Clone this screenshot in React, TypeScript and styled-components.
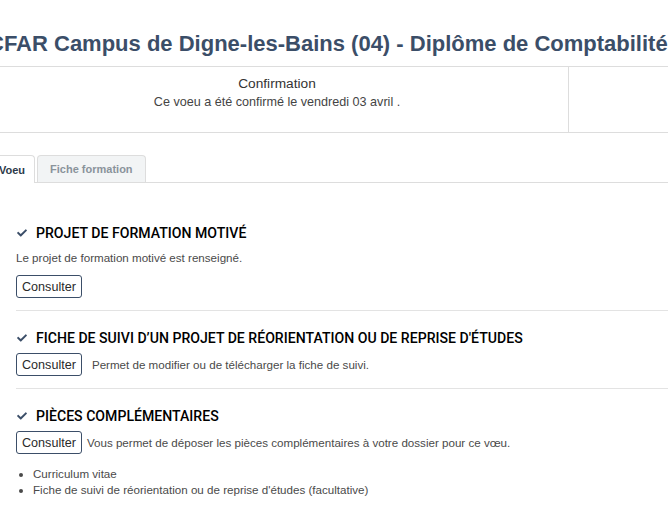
import React from "react";
import styled, { createGlobalStyle } from "styled-components";

const GlobalStyle = createGlobalStyle`
  html, body {
    margin: 0;
    padding: 0;
    background: #ffffff;
    overflow: hidden;
  }
  body {
    font-family: "Liberation Sans", Arial, sans-serif;
    color: #333;
  }
`;

const Page = styled.div`
  width: 720px;
  margin-left: -14px;
`;

const Title = styled.h1`
  margin: 0;
  padding: 30px 0 9px 2px;
  font-family: "Liberation Sans", Arial, sans-serif;
  font-size: 22px;
  line-height: 27px;
  font-weight: 700;
  color: #3b4e68;
  white-space: nowrap;
  overflow: hidden;
`;

const InfoRow = styled.div`
  display: flex;
  border-top: 1px solid #dddddd;
`;

const InfoCell = styled.div<{ $width?: number; $divider?: boolean }>`
  box-sizing: border-box;
  ${(p) => (p.$width ? `width: ${p.$width}px;` : "flex: 1;")}
  height: 66px;
  border-bottom: 1px solid #dddddd;
  ${(p) => (p.$divider ? "border-left: 1px solid #dddddd;" : "")}
  text-align: center;
  padding-top: 8px;
`;

const InfoTitle = styled.div`
  font-size: 13.7px;
  line-height: 18px;
  color: #333;
`;

const InfoText = styled.div`
  font-size: 12.6px;
  line-height: 18px;
  color: #444;
`;

const TabBar = styled.div`
  display: flex;
  gap: 2px;
  margin-top: 22px;
  border-bottom: 1px solid #dddddd;
`;

const Tab = styled.div<{ $active?: boolean }>`
  box-sizing: border-box;
  height: ${(p) => (p.$active ? 28 : 27)}px;
  padding: ${(p) => (p.$active ? "0 9px 0 12px" : "0 12px")};
  display: flex;
  align-items: center;
  font-size: 11px;
  font-weight: 700;
  border: 1px solid #dddddd;
  border-bottom: none;
  border-radius: 4px 4px 0 0;
  margin-bottom: -1px;
  background: ${(p) => (p.$active ? "#ffffff" : "#f2f4f5")};
  color: ${(p) => (p.$active ? "#2d3a4a" : "#8a939b")};
`;

const Panel = styled.div`
  padding: 40px 0 0 30px;
`;

const Section = styled.section<{ $top: number; $last?: boolean }>`
  padding: ${(p) => p.$top}px 0 12px;
  ${(p) => (p.$last ? "" : "border-bottom: 1px solid #e3e3e3;")}
`;

const Heading = styled.h2`
  display: flex;
  align-items: center;
  gap: 9px;
  margin: 0;
  padding-left: 1px;
  height: 20px;
  font-family: Roboto, "Liberation Sans", sans-serif;
  font-size: 14.1px;
  font-weight: 500;
  color: #000;
  text-transform: uppercase;
  white-space: nowrap;
`;

const CheckIcon = styled.svg`
  width: 10px;
  height: 10px;
  fill: #3b4e68;
  flex: none;
`;

const Text = styled.p`
  margin: 7px 0 0;
  font-size: 11.6px;
  line-height: 16px;
  color: #4a4a4a;
`;

const ActionRow = styled.div<{ $gap: number; $top: number }>`
  display: flex;
  align-items: center;
  gap: ${(p) => p.$gap}px;
  margin-top: ${(p) => p.$top}px;
`;

const Button = styled.button`
  box-sizing: border-box;
  height: 23px;
  padding: 0 5px;
  background: #ffffff;
  border: 1px solid #3b4e68;
  border-radius: 3px;
  font-family: "Liberation Sans", Arial, sans-serif;
  font-size: 12.6px;
  color: #2a2a2a;
  cursor: pointer;
`;

const ActionText = styled.span`
  font-size: 11.6px;
  line-height: 16px;
  color: #4a4a4a;
`;

const List = styled.ul`
  margin: 12px 0 0;
  padding-left: 17px;
  font-size: 11.6px;
  line-height: 16.3px;
  color: #4a4a4a;
`;

const Check = () => (
  <CheckIcon viewBox="0 0 512 512">
    <path d="M173.898 439.404l-166.4-166.4c-9.997-9.997-9.997-26.206 0-36.204l36.203-36.204c9.997-9.998 26.207-9.998 36.204 0L192 312.69 432.095 72.596c9.997-9.997 26.207-9.997 36.204 0l36.203 36.204c9.997 9.997 9.997 26.206 0 36.204l-294.4 294.401c-9.998 9.997-26.207 9.997-36.204-.001z" />
  </CheckIcon>
);

export default function App() {
  return (
    <Page>
      <GlobalStyle />
      <Title>CFAR Campus de Digne-les-Bains (04) - Diplôme de Comptabilité et de Gestion</Title>
      <InfoRow>
        <InfoCell $width={582}>
          <InfoTitle>Confirmation</InfoTitle>
          <InfoText>Ce voeu a été confirmé le vendredi 03 avril .</InfoText>
        </InfoCell>
        <InfoCell $divider />
      </InfoRow>
      <TabBar>
        <Tab $active>Voeu</Tab>
        <Tab>Fiche formation</Tab>
      </TabBar>
      <Panel>
        <Section $top={0}>
          <Heading>
            <Check />
            Projet de formation motivé
          </Heading>
          <Text>Le projet de formation motivé est renseigné.</Text>
          <ActionRow $gap={0} $top={9}>
            <Button>Consulter</Button>
          </ActionRow>
        </Section>
        <Section $top={17}>
          <Heading>
            <Check />
            Fiche de suivi d’un projet de réorientation ou de reprise d'études
          </Heading>
          <ActionRow $gap={10} $top={5}>
            <Button>Consulter</Button>
            <ActionText>Permet de modifier ou de télécharger la fiche de suivi.</ActionText>
          </ActionRow>
        </Section>
        <Section $top={17} $last>
          <Heading>
            <Check />
            Pièces complémentaires
          </Heading>
          <ActionRow $gap={5} $top={5}>
            <Button>Consulter</Button>
            <ActionText>Vous permet de déposer les pièces complémentaires à votre dossier pour ce vœu.</ActionText>
          </ActionRow>
          <List>
            <li>Curriculum vitae</li>
            <li>Fiche de suivi de réorientation ou de reprise d'études (facultative)</li>
          </List>
        </Section>
      </Panel>
    </Page>
  );
}
